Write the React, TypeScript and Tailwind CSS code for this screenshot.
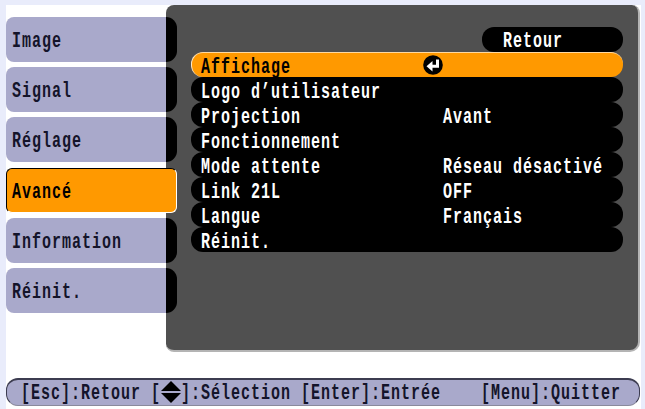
const tabs = ['Image', 'Signal', 'Réglage', 'Avancé', 'Information', 'Réinit.'];

const rows = [
  { label: 'Affichage', active: true },
  { label: 'Logo d’utilisateur' },
  { label: 'Projection', value: 'Avant' },
  { label: 'Fonctionnement' },
  { label: 'Mode attente', value: 'Réseau désactivé' },
  { label: 'Link 21L', value: 'OFF' },
  { label: 'Langue', value: 'Français' },
  { label: 'Réinit.' },
];

const Txt = ({ children }: { children: React.ReactNode }) => (
  <span className="inline-block translate-y-[2px] scale-y-[1.5] whitespace-pre font-['Liberation_Mono',monospace] text-[15px] leading-none font-bold tracking-[1px]">
    {children}
  </span>
);

const EnterIcon = () => (
  <svg width="20" height="20" viewBox="0 0 20 20">
    <circle cx="10" cy="10" r="9.8" fill="#000" />
    <path d="M14.5 4.5v6.8H7" fill="none" stroke="#fff" strokeWidth="3" />
    <path d="M9.5 6v10.5L3.5 11.3z" fill="#fff" />
  </svg>
);

const UpDownIcon = () => (
  <svg width="20" height="22" viewBox="0 0 20 22">
    <path d="M10 0l10 10H0z" fill="#000" />
    <path d="M0 12h20L10 22z" fill="#000" />
  </svg>
);

const Tab = ({ label }: { label: string }) => {
  if (label === 'Avancé') {
    return (
      <div className="relative z-10 mt-px flex h-[45px] w-[171px] items-center rounded-[6px] border border-black border-r-white border-b-white bg-[#ff9900] pl-[5px] text-black">
        <Txt>{label}</Txt>
      </div>
    );
  }
  return (
    <div className="relative z-10 flex h-[45px] w-[171px] text-[#14142a]">
      <div className="flex w-[160px] items-center rounded-l-[8px] bg-[#a9a9cb] pl-[6px]">
        <Txt>{label}</Txt>
      </div>
      <div className="w-[11px] rounded-r-[11px] bg-black" />
    </div>
  );
};

export default function App() {
  return (
    <div className="h-[409px] w-[645px] overflow-hidden bg-[#e9ecfb] pt-[5px] pl-[6px]">
      <div className="h-[404px] w-[635px] bg-white">
        <div className="flex h-[347px]">
          <div className="flex w-[160px] flex-col gap-[5px] pt-[12px]">
            {tabs.map((t) => (
              <Tab key={t} label={t} />
            ))}
          </div>
          <div className="flex w-[474px] flex-col rounded-tl-[8px] rounded-tr-[8px] rounded-br-[10px] rounded-bl-[8px] border-r-2 border-b-2 border-[#b4b4b4] bg-[#505050] pt-[22px] pr-[15px] pl-[25px] text-white">
            <div className="flex h-[25px] w-[141px] items-center self-end rounded-[12px] bg-black pl-[21px]">
              <Txt>Retour</Txt>
            </div>
            {rows.map((r) => (
              <div
                key={r.label}
                className={
                  r.active
                    ? 'relative flex h-[25px] items-center rounded-[12px] border-t border-l border-t-[#ffd9a0] border-l-[#ffe9c8] bg-[#ff9900] pl-[9px] text-black'
                    : 'flex h-[25px] items-center rounded-[12px] bg-black pl-[10px]'
                }
              >
                <div className="w-[222px] -translate-y-[2px]">
                  <Txt>{r.label}</Txt>
                </div>
                {r.active && (
                  <div>
                    <EnterIcon />
                  </div>
                )}
                {r.value && (
                  <div className="ml-[20px] -translate-y-[2px]">
                    <Txt>{r.value}</Txt>
                  </div>
                )}
              </div>
            ))}
          </div>
        </div>
        <div className="mt-[26px] flex h-[28px] w-[634px] items-center justify-between rounded-[12px] border-x border-t-2 border-b border-[#3c3c50] border-b-[#8a8a9c] bg-[#a9a9cb] pr-[18px] pb-[2px] pl-[14px] text-[#14142a]">
          <div className="flex items-center">
            <Txt>[Esc]:Retour [</Txt>
            <UpDownIcon />
            <Txt>]:Sélection [Enter]:Entrée</Txt>
          </div>
          <Txt>[Menu]:Quitter</Txt>
        </div>
      </div>
    </div>
  );
}
